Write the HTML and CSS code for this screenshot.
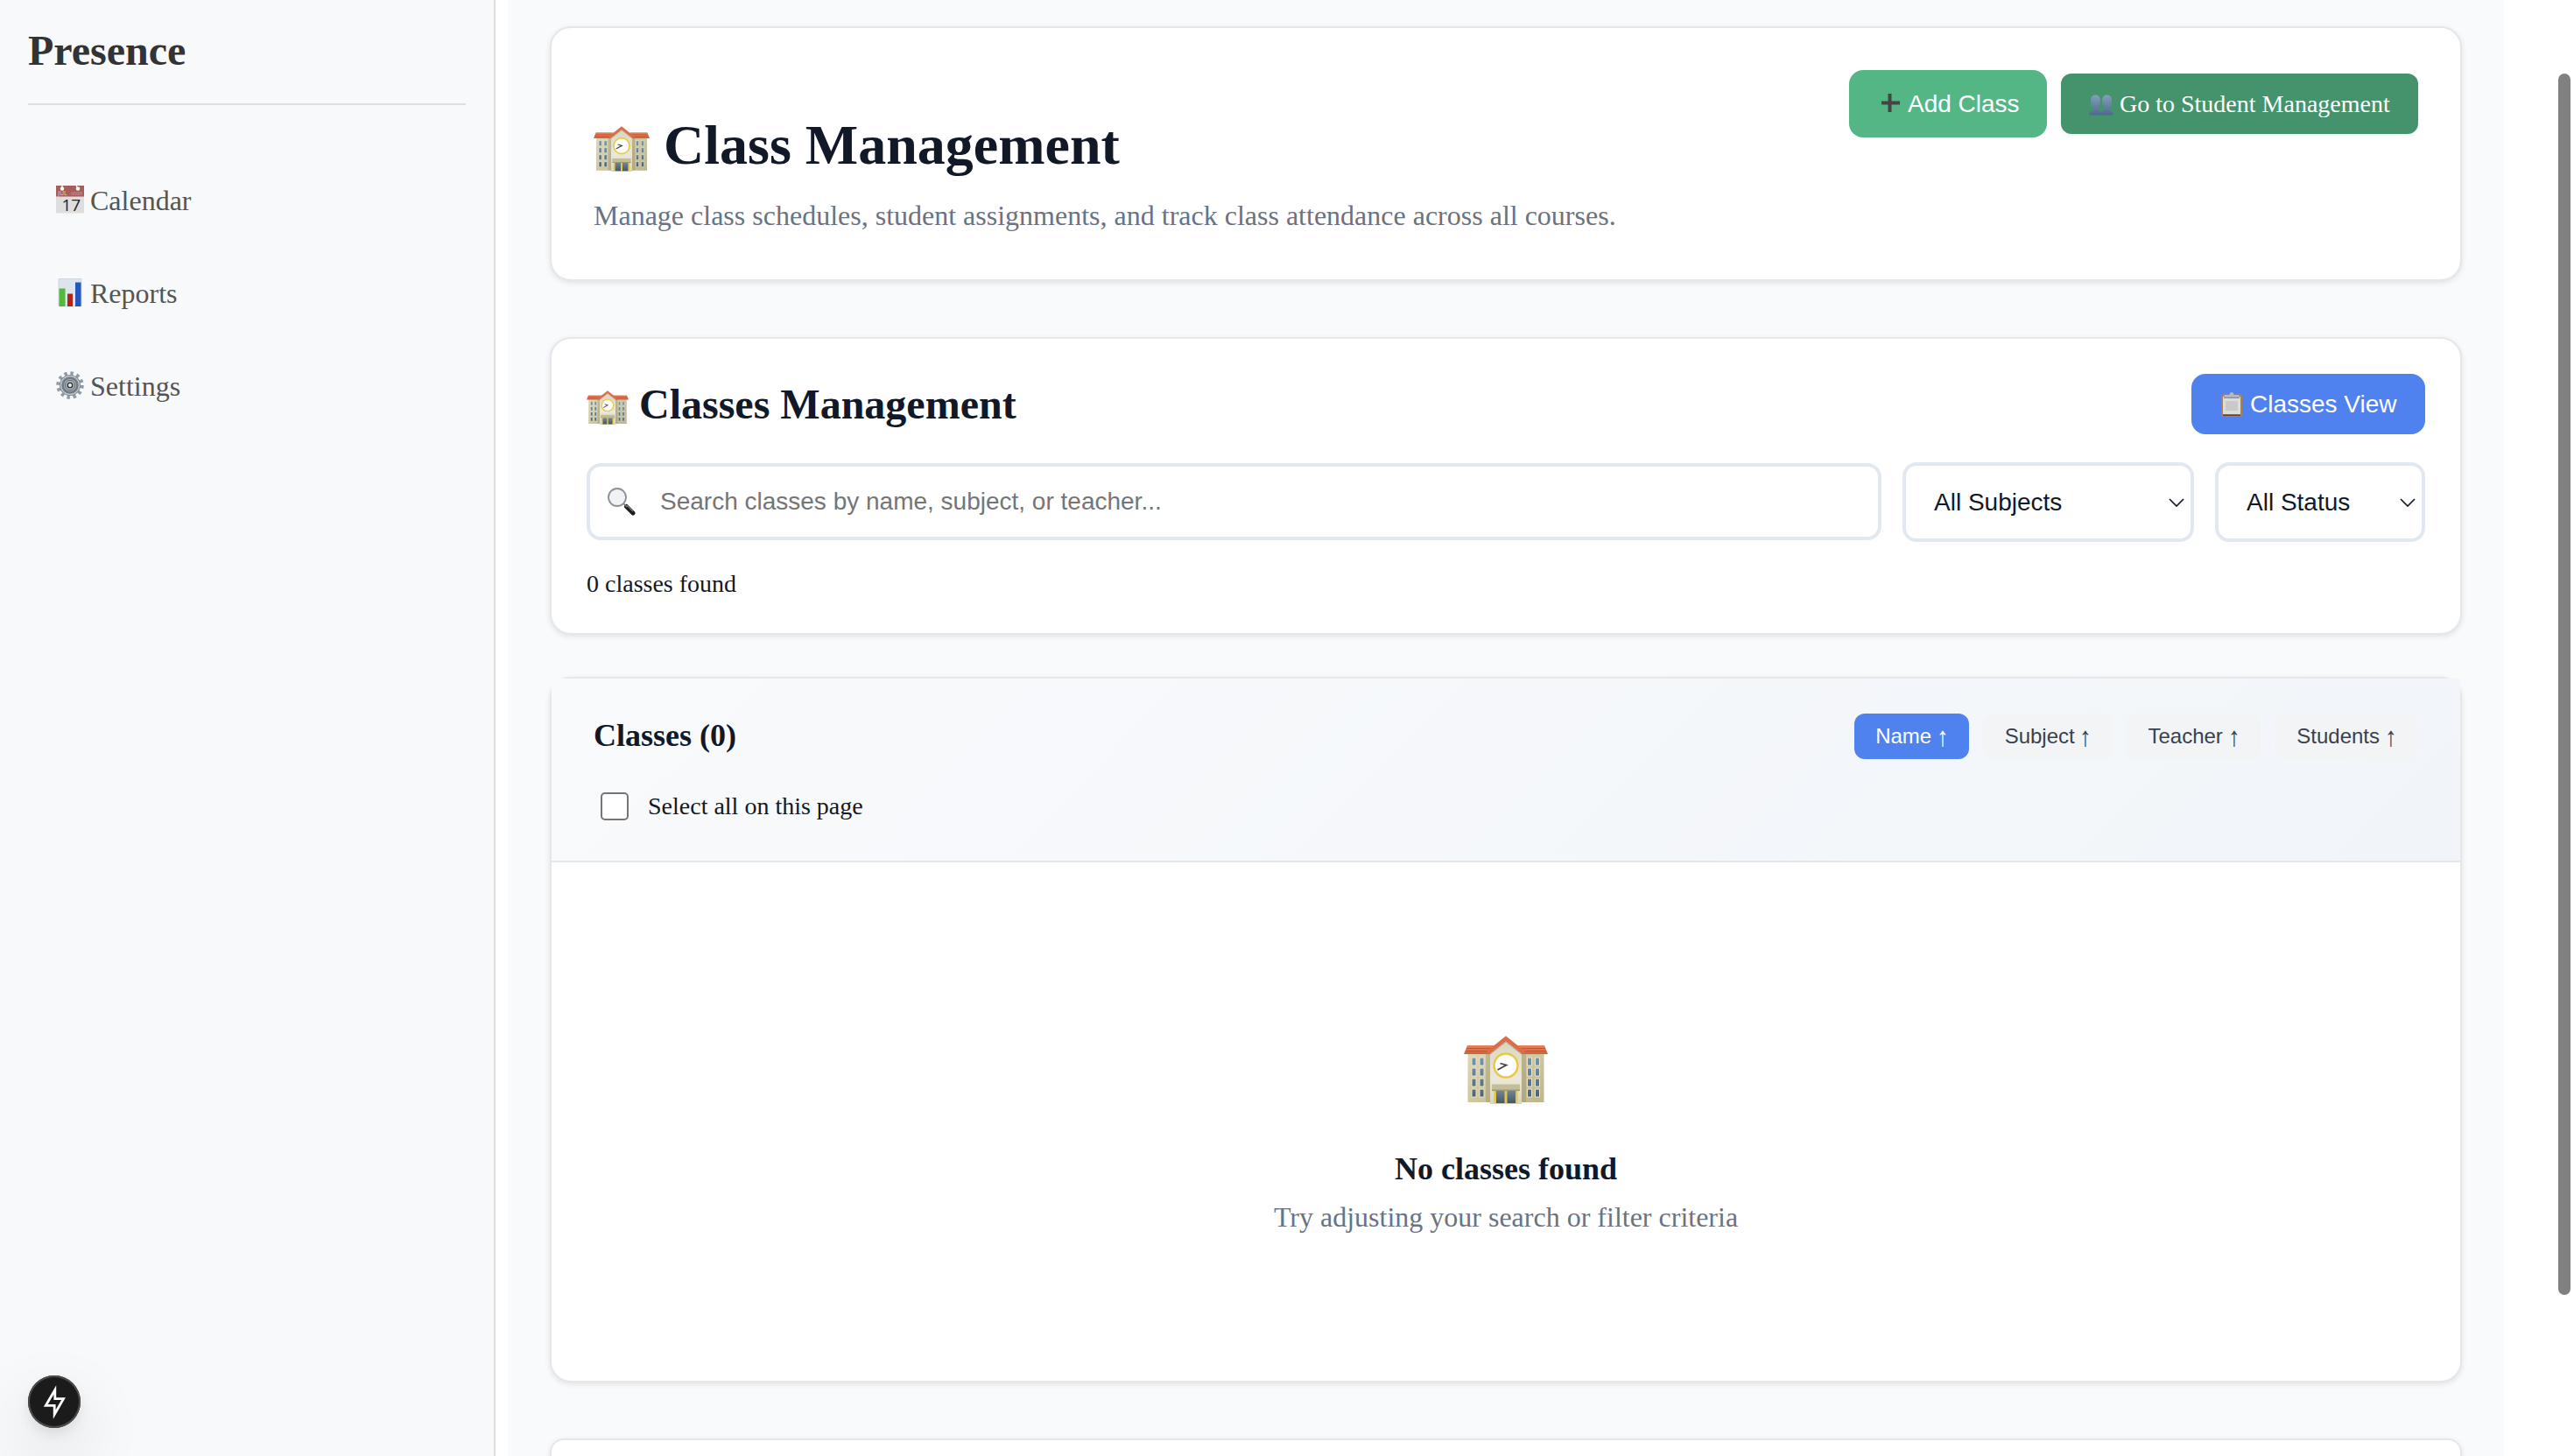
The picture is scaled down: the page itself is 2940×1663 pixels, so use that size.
FILE: index.html
```html
<!DOCTYPE html>
<html lang="en">
<head>
<meta charset="utf-8">
<title>Presence - Class Management</title>
<link rel="stylesheet" href="styles.css">
</head>
<body>
<svg class="defs" width="0" height="0" aria-hidden="true">
  <defs>
    <linearGradient id="wall" x1="0" y1="0" x2="1" y2="1"><stop offset="0" stop-color="#dfd9b4"/><stop offset="1" stop-color="#bdb58b"/></linearGradient>
    <linearGradient id="front" x1="0" y1="0" x2="0" y2="1"><stop offset="0" stop-color="#d9d4bc"/><stop offset="0.6" stop-color="#ece8d8"/><stop offset="1" stop-color="#d9d4ba"/></linearGradient>
    <linearGradient id="tiles" x1="0" y1="0" x2="0" y2="1"><stop offset="0" stop-color="#e8825a"/><stop offset="1" stop-color="#d5603c"/></linearGradient>
    <linearGradient id="door" x1="0" y1="0" x2="0" y2="1"><stop offset="0" stop-color="#708493"/><stop offset="1" stop-color="#455866"/></linearGradient>
    <linearGradient id="glass" x1="0" y1="0" x2="0" y2="1"><stop offset="0" stop-color="#7596af"/><stop offset="1" stop-color="#4c6475"/></linearGradient>
    <linearGradient id="people-fill" x1="0" y1="0" x2="0" y2="1"><stop offset="0" stop-color="#839fba"/><stop offset="1" stop-color="#4d698f"/></linearGradient>
    <symbol id="school" viewBox="0 0 96 78">
      <path fill="url(#wall)" d="M4.500 19h87v57h-87z"/>
      <path fill="#8f8a68" opacity=".35" d="M25 19h5v57h-5zM66 19h5v57h-5z"/>
      <path fill="url(#tiles)" d="M4 11h30v10H0zM92 11H62v10h34z"/>
      <path stroke="#b9502f" stroke-width=".8" d="M3 14.500h30M2 17.700h29M93 14.500H63M94 17.700H65"/>
      <path fill="url(#front)" d="M30 18 48 4l18 14v60H30z"/>
      <path fill="none" stroke="#dc6d49" stroke-width="4.500" d="M27 20 48 3.200 69 20"/>
      <path fill="none" stroke="#8c8062" stroke-width="1" opacity=".6" d="M30 21 48 7 66 21"/>
      <circle cx="48" cy="34" r="13.500" fill="#fdfdfd" stroke="#e6ca45" stroke-width="2.400"/>
      <path fill="none" stroke="#444" stroke-width="1.800" d="m41.500 31.500 7 2-10 5.500"/>
      <path fill="#c3be99" d="M32 55.500h32v6.500H32z"/>
      <path fill="#9d9875" d="M32 61.500h32V63H32z"/>
      <path fill="#e2c549" d="M34.500 63h27v14h-27z"/>
      <path fill="url(#door)" d="M37 63h9.500v14H37zM49.500 63H59v14h-9.500z"/>
      <g fill="url(#glass)" stroke="#ece6cc" stroke-width="1">
        <path d="M9 25h5v9H9zM18 25h5v9h-5zM9 37h5v9H9zM18 37h5v9h-5zM9 49h5v9H9zM18 49h5v9h-5zM9 61h5v9H9zM18 61h5v9h-5z"/>
        <path d="M72.500 25h5v9h-5zM81.500 25h5v9h-5zM72.500 37h5v9h-5zM81.500 37h5v9h-5zM72.500 49h5v9h-5zM81.500 49h5v9h-5zM72.500 61h5v9h-5zM81.500 61h5v9h-5z"/>
      </g>
    </symbol>
  </defs>
</svg>

<div class="app">
  <aside class="sidebar">
    <h2 class="brand">Presence</h2>
    <nav class="nav">
      <a class="nav-link">
        <svg class="nav-icon" viewBox="0 0 32 32"><path fill="#dedede" d="M0 12h32v19.500H0z"/><path fill="#a85d5b" d="M0 0h32v12.500H0z"/><path fill="#b77371" d="M17 7h13v4H17z"/><circle cx="7" cy="3.500" r="2.200" fill="#fff"/><circle cx="25" cy="3.500" r="2.200" fill="#fff"/><path stroke="#fff" stroke-width="1.300" d="M7 0v3M23 0l2 3"/><text x="2" y="10.500" font-size="7" class="cal-month">JUL</text><text x="6.500" y="28.500" font-size="19" class="cal-day">17</text></svg>
        Calendar</a>
      <a class="nav-link">
        <svg class="nav-icon" viewBox="0 0 32 32"><path fill="#dce5ed" stroke="#c6d0d9" stroke-width=".8" d="M3 .5h26v31H3z"/><path fill="#54b93b" d="M3.500 11.500h7V32h-7z"/><path fill="#b32318" d="M13 17.500h6V32h-6z"/><path fill="#2356be" d="M22 4.500h6.500V32H22z"/></svg>
        Reports</a>
      <a class="nav-link">
        <svg class="nav-icon" viewBox="0 0 32 32"><circle cx="16" cy="16" r="13.500" fill="none" stroke="#919ba5" stroke-width="4.500" stroke-dasharray="3.400 3.668"/><circle cx="16" cy="16" r="9.500" fill="#a9b1b9" stroke="#737c85" stroke-width="5"/><circle cx="16" cy="16" r="10.500" fill="none" stroke="#bcc4cc" stroke-width="1.500"/><circle cx="16" cy="16" r="5.500" fill="#b9c1c8" stroke="#5d656d"/><circle cx="16" cy="16" r="2.800" fill="#eef0f2" stroke="#343a41" stroke-width="1.600"/></svg>
        Settings</a>
    </nav>
  </aside>

  <main class="main">
    <section class="card hero">
      <div class="hero-text">
        <h1 class="hero-title"><svg class="school-lg"><use href="#school"/></svg>Class Management</h1>
        <p class="hero-sub">Manage class schedules, student assignments, and track class attendance across all courses.</p>
      </div>
      <div class="hero-actions">
        <button class="btn btn-add"><svg class="btn-icon" viewBox="0 0 28 28"><path fill="#444" d="M12.500 4h4v8.500H26v4h-9.500V25h-4v-8.500H5v-4h7.500z"/></svg>Add Class</button>
        <a class="btn btn-students"><svg class="btn-icon" viewBox="0 0 28 28"><path fill="url(#people-fill)" d="M0 26.500c0-3 1-4.500 5-5.500v-2c-2-2.500-3-5-3-8.500C2 6 4 3.500 7.500 3.500S13 6 13 10.500c0 3.500-1 6-2.500 8.500v2c1.500.5 2.500 1 3.500 1.500 1-.5 2-1 3.500-1.500v-2c-1.500-2.500-2.500-5-2.500-8.500 0-4.500 2-7 5.500-7s5.500 2.500 5.500 7c0 3.500-1 6-3 8.500v2c4 1 5 2.500 5 5.500z"/></svg>Go to Student Management</a>
      </div>
    </section>

    <section class="card filters">
      <div class="filters-head">
        <h2 class="filters-title"><svg class="school-md"><use href="#school"/></svg>Classes Management</h2>
        <button class="btn btn-view"><svg class="btn-icon" viewBox="0 0 28 28"><rect x="2" y="2.500" width="24" height="25" rx="1.500" fill="#a98250"/><path fill="#dcdcdc" d="M4 5h20v20H4z"/><path fill="#c9c9c9" d="M7 10h13l1 1v10H7z"/><path fill="#70441e" d="M4 25.500h20V27H4z"/><path fill="#b5b9c2" d="M5.500 3h6L12 1q2-2 4 0l.5 2h6v2.500h-17z"/><path fill="#8b8d93" d="M5 5.500h18V7H5z"/></svg>Classes View</button>
      </div>
      <div class="filters-row">
        <label class="search">
          <svg class="search-icon" viewBox="0 0 32 32"><path stroke="#1d1d1f" stroke-width="5" stroke-linecap="round" d="m21.500 21.500 7.500 7.500"/><path stroke="#777" stroke-width="1.500" d="m17 17 5 5M22 20l7 7"/><circle cx="11" cy="11" r="10" fill="#f1f2f3" stroke="#8a9099" stroke-width="1.800"/></svg>
          <span class="placeholder">Search classes by name, subject, or teacher...</span>
        </label>
        <div class="select select-subject">All Subjects<svg class="chevron" viewBox="0 0 18 10"><path d="m1 1 8 8 8-8"/></svg></div>
        <div class="select select-status">All Status<svg class="chevron" viewBox="0 0 18 10"><path d="m1 1 8 8 8-8"/></svg></div>
      </div>
      <p class="count">0 classes found</p>
    </section>

    <section class="card list">
      <header class="list-head">
        <div class="list-bar">
          <h3 class="list-title">Classes (0)</h3>
          <div class="sorts">
            <button class="sort sort-name active">Name <span class="arrow">↑</span></button>
            <button class="sort sort-subject">Subject <span class="arrow">↑</span></button>
            <button class="sort sort-teacher">Teacher <span class="arrow">↑</span></button>
            <button class="sort sort-students">Students <span class="arrow">↑</span></button>
          </div>
        </div>
        <label class="select-all"><span class="checkbox"></span>Select all on this page</label>
      </header>
      <div class="empty">
        <svg class="school-xl"><use href="#school"/></svg>
        <h3 class="empty-title">No classes found</h3>
        <p class="empty-sub">Try adjusting your search or filter criteria</p>
      </div>
    </section>

    <section class="card next-card"></section>
  </main>
</div>

<div class="scroll-thumb"></div>
<button class="dev-badge" aria-label="Dev tools"><svg viewBox="0 0 60 60"><path fill="none" stroke="#fff" stroke-width="2.800" d="M30.800 16.500v10.200h9.700L30.200 44.500V34.300h-9.900z"/></svg></button>
</body>
</html>
```

FILE: styles.css
```css
* {
  box-sizing: border-box;
  margin: 0;
  padding: 0;
}

body {
  width: 2940px;
  height: 1663px;
  overflow: hidden;
  background: #fff;
  color: #111827;
  font-family: "Liberation Serif", "Times New Roman", serif;
  font-size: 28px;
  line-height: 32px;
}

svg {
  display: block;
  flex: none;
}

.defs {
  position: absolute;
}

button {
  border: 0;
  font-family: "Liberation Sans", Arial, sans-serif;
}

.app {
  display: flex;
  gap: 14px;
  height: 1663px;
}

/* Sidebar */
.sidebar {
  width: 566px;
  padding: 30px 32px 0;
  background: #f8f9fb;
  border-right: 2px solid #dedfe0;
}

.brand {
  height: 90px;
  border-bottom: 2px solid #dedfe0;
  color: #333;
  font-size: 48px;
  line-height: 56px;
}

.nav {
  margin-top: 56px;
}

.nav-link {
  display: flex;
  align-items: center;
  gap: 7px;
  padding: 35px 32px;
  color: #555;
  font-size: 32px;
  line-height: 36px;
}

.nav-icon {
  width: 32px;
  height: 32px;
  margin-top: -2px;
  overflow: visible;
}

.cal-month {
  fill: #e8cfce;
  font-family: "Open Sans", sans-serif;
}

.cal-day {
  fill: #222;
  font-family: "Open Sans", sans-serif;
}

/* Main column */
.main {
  width: 2280px;
  padding: 30px 48px 0;
  overflow: hidden;
  background: #f9fafc;
}

.card {
  background: #fff;
  border: 2px solid #e5e7eb;
  border-radius: 24px;
  box-shadow: 0 2px 6px rgba(0, 0, 0, 0.1);
}

.btn {
  display: flex;
  align-items: center;
  gap: 7px;
  padding: 0 0 0 32px;
  color: #fff;
  font-size: 28px;
  line-height: 32px;
  white-space: nowrap;
}

.btn-icon {
  width: 28px;
  height: 28px;
}

/* Page heading */
.hero {
  display: flex;
  justify-content: space-between;
  align-items: flex-start;
  height: 291px;
  padding: 48px;
}

.hero-text {
  padding-top: 50px;
}

.hero-title {
  display: flex;
  align-items: center;
  gap: 16px;
  font-size: 64px;
  line-height: 72px;
}

.school-lg {
  width: 64px;
  height: 52px;
  margin-top: 7px;
}

.hero-sub {
  margin-top: 26px;
  color: #6b7280;
  font-size: 32px;
  line-height: 36px;
}

.hero-actions {
  display: flex;
  align-items: center;
  gap: 16px;
}

.btn-add {
  width: 226px;
  height: 77px;
  border-radius: 16px;
  background: #55b685;
}

.btn-add .btn-icon {
  margin-top: -4px;
}

.btn-students {
  width: 408px;
  height: 69px;
  border-radius: 12px;
  background: #44936c;
  box-shadow: 0 2px 4px rgba(0, 0, 0, 0.05);
}

/* Filters */
.filters {
  height: 340px;
  margin-top: 64px;
  padding: 40px;
}

.filters-head {
  display: flex;
  justify-content: space-between;
  align-items: center;
}

.filters-title {
  display: flex;
  align-items: center;
  gap: 12px;
  font-size: 48px;
  line-height: 56px;
}

.school-md {
  width: 48px;
  height: 39px;
  margin-top: 7px;
}

.btn-view {
  width: 267px;
  height: 69px;
  border-radius: 16px;
  background: #4f82ef;
}

.filters-row {
  display: flex;
  align-items: flex-start;
  gap: 24px;
  margin-top: 32px;
}

.search,
.select {
  display: flex;
  align-items: center;
  border: 4px solid #e2e8f0;
  border-radius: 16px;
  background: #fff;
  font-family: "Liberation Sans", Arial, sans-serif;
}

.search {
  flex: 1;
  gap: 28px;
  height: 88px;
  margin-top: 1px;
  padding-left: 20px;
}

.search-icon {
  width: 32px;
  height: 32px;
}

.placeholder {
  margin-top: -1px;
  color: #757575;
}

.select {
  justify-content: space-between;
  height: 91px;
  padding: 0 7px 0 32px;
}

.select-subject {
  width: 333px;
}

.select-status {
  width: 240px;
}

.chevron {
  width: 18px;
  height: 10px;
}

.chevron path {
  fill: none;
  stroke: #111827;
  stroke-width: 1.7;
}

.count {
  margin-top: 32px;
}

/* Class list */
.list {
  height: 806px;
  margin-top: 48px;
}

.list-head {
  height: 210px;
  padding: 40px 48px 0;
  border-bottom: 2px solid #e5e7eb;
  background: linear-gradient(135deg, #f9fafc 0%, #f1f5f9 100%);
}

.list-bar {
  display: flex;
  justify-content: space-between;
  align-items: center;
}

.list-title {
  margin-top: -2px;
  font-size: 36px;
  line-height: 40px;
}

.sorts {
  display: flex;
  gap: 16px;
}

.sort {
  height: 52px;
  border-radius: 12px;
  background: #f3f4f6;
  color: #374151;
  font-size: 24px;
  line-height: 28px;
  white-space: nowrap;
}

.sort.active {
  background: #4f82ef;
  color: #fff;
}

.arrow {
  display: inline-block;
  line-height: 20px;
  transform: translateY(1px) scale(1.15, 1.3);
}

.sort-name {
  width: 131px;
}

.sort-subject {
  width: 148px;
}

.sort-teacher {
  width: 153px;
}

.sort-students {
  width: 164px;
}

.select-all {
  display: flex;
  align-items: center;
  gap: 22px;
  margin-top: 38px;
  padding-left: 8px;
}

.checkbox {
  width: 32px;
  height: 32px;
  border: 2px solid #767676;
  border-radius: 5px;
  background: #fff;
}

.empty {
  display: flex;
  flex-direction: column;
  align-items: center;
  padding-top: 198px;
}

.school-xl {
  width: 96px;
  height: 78px;
}

.empty-title {
  margin-top: 54px;
  font-size: 36px;
  line-height: 40px;
}

.empty-sub {
  margin-top: 17px;
  color: #6b7280;
  font-size: 32px;
  line-height: 36px;
}

.next-card {
  height: 200px;
  margin-top: 64px;
  border-radius: 16px;
}

/* Overlays */
.scroll-thumb {
  position: absolute;
  top: 84px;
  left: 2922px;
  width: 14px;
  height: 1395px;
  border-radius: 7px;
  background: #808080;
}

.dev-badge {
  position: absolute;
  left: 32px;
  top: 1571px;
  width: 60px;
  height: 60px;
  border-radius: 50%;
  background: #1b1b1c;
  box-shadow: inset 0 0 0 2px #4b4b4d, 0 8px 16px -2px rgba(0, 0, 0, 0.1),
    0 32px 80px rgba(0, 0, 0, 0.14);
}
```
